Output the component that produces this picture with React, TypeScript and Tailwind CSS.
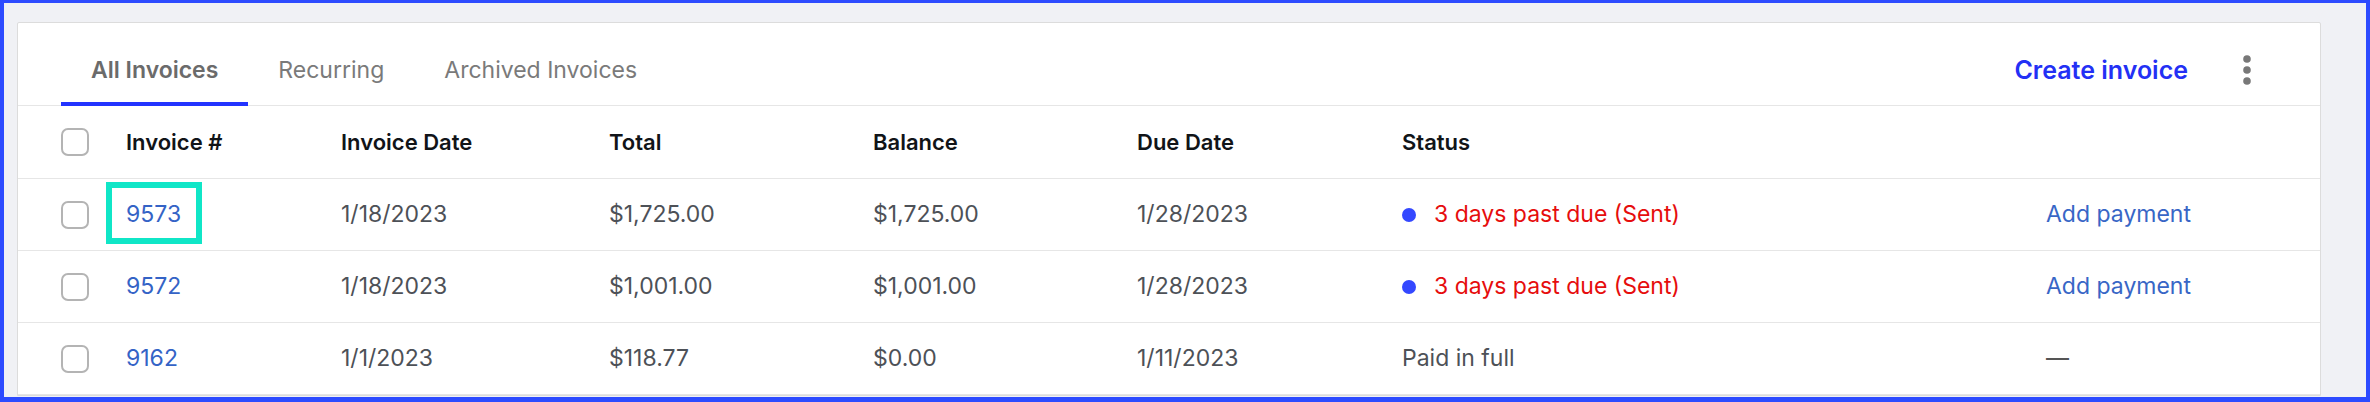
import React from 'react';

type Invoice = {
  id: string;
  date: string;
  total: string;
  balance: string;
  due: string;
  status: string;
  overdue: boolean;
  highlight?: boolean;
};

const invoices: Invoice[] = [
  { id: '9573', date: '1/18/2023', total: '$1,725.00', balance: '$1,725.00', due: '1/28/2023', status: '3 days past due (Sent)', overdue: true, highlight: true },
  { id: '9572', date: '1/18/2023', total: '$1,001.00', balance: '$1,001.00', due: '1/28/2023', status: '3 days past due (Sent)', overdue: true },
  { id: '9162', date: '1/1/2023', total: '$118.77', balance: '$0.00', due: '1/11/2023', status: 'Paid in full', overdue: false },
];

const tabs = ['All Invoices', 'Recurring', 'Archived Invoices'];

const cols = 'grid grid-cols-[65px_215px_268px_264px_264px_265px_644px_1fr] items-center';

function Checkbox() {
  return <div className="w-[28px] h-[28px] rounded-[7px] border-[2.5px] border-[#b4b4b4] bg-white" />;
}

export default function App() {
  return (
    <div
      className="h-[402px] overflow-hidden bg-[#f0f1f5] border-[#2d4bff] border-l-4 border-r-4 border-t-[3px] border-b-[5px] pl-[13px] pr-[45px] pt-[19px]"
      style={{ fontFamily: 'Inter, "Noto Sans", sans-serif' }}
    >
      <div className="bg-white border border-[#dcdcdc] rounded-t-[2px]">
        {/* Tabs header */}
        <div className="h-[83px] flex items-end justify-between border-b border-[#e6e6e6] pl-[43px] pr-[68px]">
          <div className="flex items-end">
            {tabs.map((t, i) => (
              <div
                key={t}
                className={`px-[30px] pb-[18px] -mb-px border-b-4 text-[23px] leading-[28px] ${
                  i === 0 ? 'border-[#2233ff] text-[#6b6b6b] font-semibold' : 'border-transparent text-[#7a7a7a]'
                }`}
              >
                {t}
              </div>
            ))}
          </div>
          <div className="flex items-center gap-[54px] self-center mt-[12px]">
            <button className="text-[25px] leading-[30px] font-semibold text-[#2330f5]">Create invoice</button>
            <svg width="10" height="32" viewBox="0 0 10 32" className="text-[#787878]">
              <circle cx="5" cy="5" r="3.8" fill="currentColor" />
              <circle cx="5" cy="16" r="3.8" fill="currentColor" />
              <circle cx="5" cy="27" r="3.8" fill="currentColor" />
            </svg>
          </div>
        </div>

        {/* Column headings */}
        <div className={`${cols} h-[73px] border-b border-[#e6e6e6] pl-[43px] text-[22px] font-semibold text-[#111418]`}>
          <Checkbox />
          <div>Invoice #</div>
          <div>Invoice Date</div>
          <div>Total</div>
          <div>Balance</div>
          <div>Due Date</div>
          <div>Status</div>
          <div />
        </div>

        {/* Rows */}
        {invoices.map((inv) => (
          <div key={inv.id} className={`${cols} h-[72px] border-b border-[#e6e6e6] pl-[43px] text-[23px] text-[#4d5157]`}>
            <Checkbox />
            <div>
              <span className="relative text-[#3463c6]">
                {inv.id}
                {inv.highlight && (
                  <span className="absolute -left-[20px] -right-[21px] -top-[18px] -bottom-[16px] border-[6px] border-[#10e6c7]" />
                )}
              </span>
            </div>
            <div>{inv.date}</div>
            <div>{inv.total}</div>
            <div>{inv.balance}</div>
            <div>{inv.due}</div>
            <div className="flex items-center">
              {inv.overdue ? (
                <>
                  <span className="w-[14px] h-[14px] rounded-full bg-[#3448ff] mr-[18px]" />
                  <span className="text-[#e60d0d]">{inv.status}</span>
                </>
              ) : (
                <span>{inv.status}</span>
              )}
            </div>
            <div>
              {inv.overdue ? (
                <a className="text-[#3866c6] cursor-pointer">Add payment</a>
              ) : (
                <span className="text-[#555]">—</span>
              )}
            </div>
          </div>
        ))}
      </div>
    </div>
  );
}
